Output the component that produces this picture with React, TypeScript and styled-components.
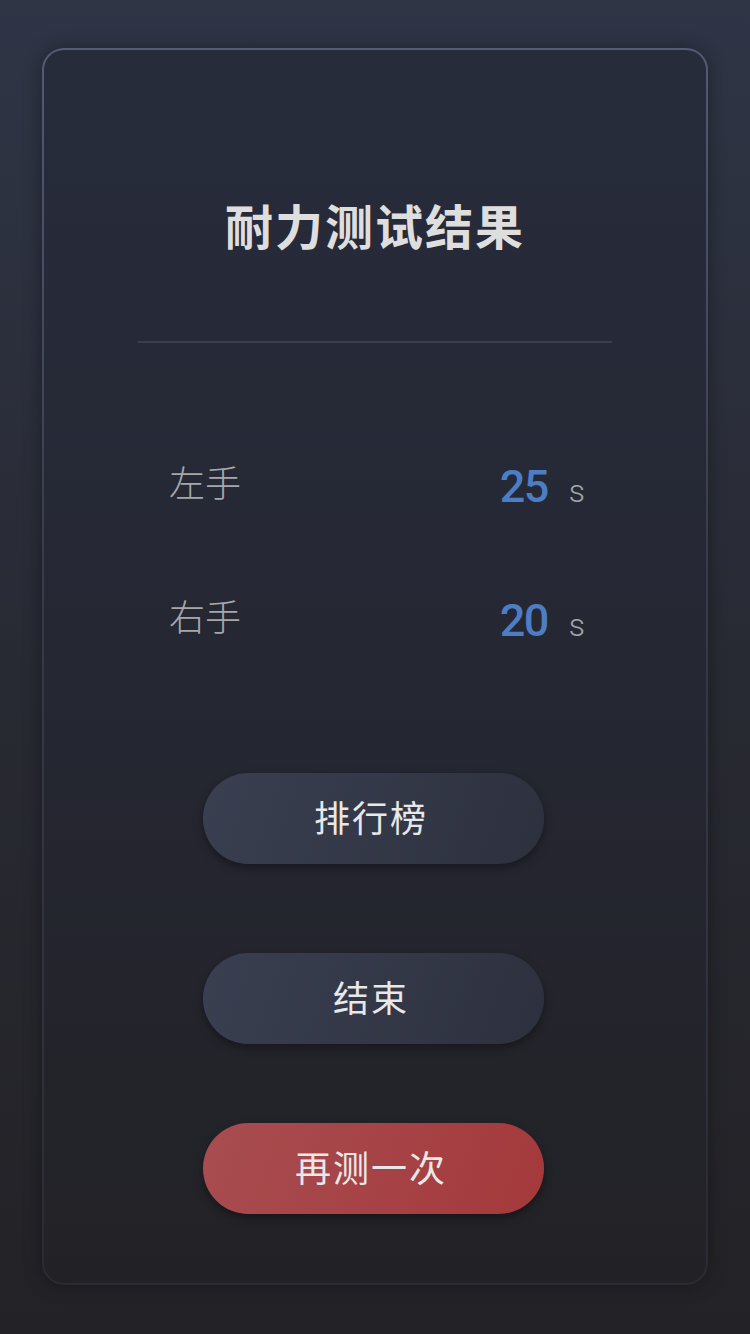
import React from 'react';
import styled, { createGlobalStyle } from 'styled-components';

const GlobalStyle = createGlobalStyle`
    html, body {
        margin: 0;
        padding: 0;
        height: 100%;
    }
    body {
        background: linear-gradient(180deg, #2f3546 0%, #282a33 50%, #232226 100%);
        font-family: Roboto, "Noto Sans CJK SC", sans-serif;
    }
`

const Page = styled.div`
    width: 750px;
    height: 1334px;
    box-sizing: border-box;
    padding: 48px 42px 0 42px;
`

const Card = styled.div`
    box-sizing: border-box;
    width: 666px;
    height: 1237px;
    border-radius: 22px;
    border: 2px solid transparent;
    background:
        linear-gradient(180deg, #272c3b 0%, #252733 50%, #222226 100%) padding-box,
        linear-gradient(180deg, #545b74 0%, #383c4c 40%, #2a2b33 100%) border-box;
    box-shadow: 0 0 18px rgba(0, 0, 0, 0.35);
    display: flex;
    flex-direction: column;
    align-items: center;
    padding-top: 145px;
`

const Title = styled.h1`
    margin: 0;
    font-family: "Noto Sans CJK SC", sans-serif;
    font-size: 48px;
    line-height: 58px;
    font-weight: 700;
    letter-spacing: 2px;
    color: #dedede;
`

const Divider = styled.div`
    width: 474px;
    height: 2px;
    background: #3a3e4d;
    margin-top: 88px;
`

const Rows = styled.div`
    width: 100%;
    box-sizing: border-box;
    padding: 0 121px 0 125px;
    margin-top: 109px;
    display: flex;
    flex-direction: column;
    gap: 74px;
`

const Row = styled.div`
    height: 60px;
    display: flex;
    align-items: center;
    justify-content: space-between;
`

const Label = styled.span`
    font-family: "Noto Sans CJK SC", sans-serif;
    font-size: 36px;
    font-weight: 300;
    color: #a7a7aa;
    margin-top: -2px;
`

const Value = styled.div`
    display: flex;
    align-items: baseline;
    gap: 21px;
    margin-top: 9px;
`

const Num = styled.span`
    font-family: Roboto, sans-serif;
    font-size: 45px;
    font-weight: 500;
    color: #4d7dc2;
    letter-spacing: -1.5px;
`

const Unit = styled.span`
    font-family: Roboto, sans-serif;
    font-size: 32px;
    font-weight: 300;
    color: #a4a4a8;
`

const Buttons = styled.div`
    margin-top: 127px;
    margin-right: 4px;
    display: flex;
    flex-direction: column;
    align-items: center;
    gap: 89px;
`

const Button = styled.button<{ danger?: boolean }>`
    width: 341px;
    height: 91px;
    border: none;
    border-radius: 46px;
    background: ${props => props.danger
        ? 'linear-gradient(110deg, #a84d51 0%, #a4393b 100%)'
        : 'linear-gradient(110deg, #3a3f51 0%, #2d313e 100%)'};
    box-shadow: 0 4px 8px rgba(0, 0, 0, 0.35);
    font-family: "Noto Sans CJK SC", sans-serif;
    font-size: 36px;
    font-weight: 400;
    letter-spacing: 2px;
    padding: 0 4px 5px 0;
    color: #e8e8e8;
    cursor: pointer;
    &:last-child {
        margin-top: -10px;
    }
`

const results = [
    { name: '左手', sec: 25 },
    { name: '右手', sec: 20 },
]

const App = () => {
    return (
        <>
            <GlobalStyle />
            <Page>
                <Card>
                    <Title>耐力测试结果</Title>
                    <Divider />
                    <Rows>
                        {results.map(item => (
                            <Row key={item.name}>
                                <Label>{item.name}</Label>
                                <Value>
                                    <Num>{item.sec}</Num>
                                    <Unit>s</Unit>
                                </Value>
                            </Row>
                        ))}
                    </Rows>
                    <Buttons>
                        <Button>排行榜</Button>
                        <Button>结束</Button>
                        <Button danger>再测一次</Button>
                    </Buttons>
                </Card>
            </Page>
        </>
    );
};

export default App;
